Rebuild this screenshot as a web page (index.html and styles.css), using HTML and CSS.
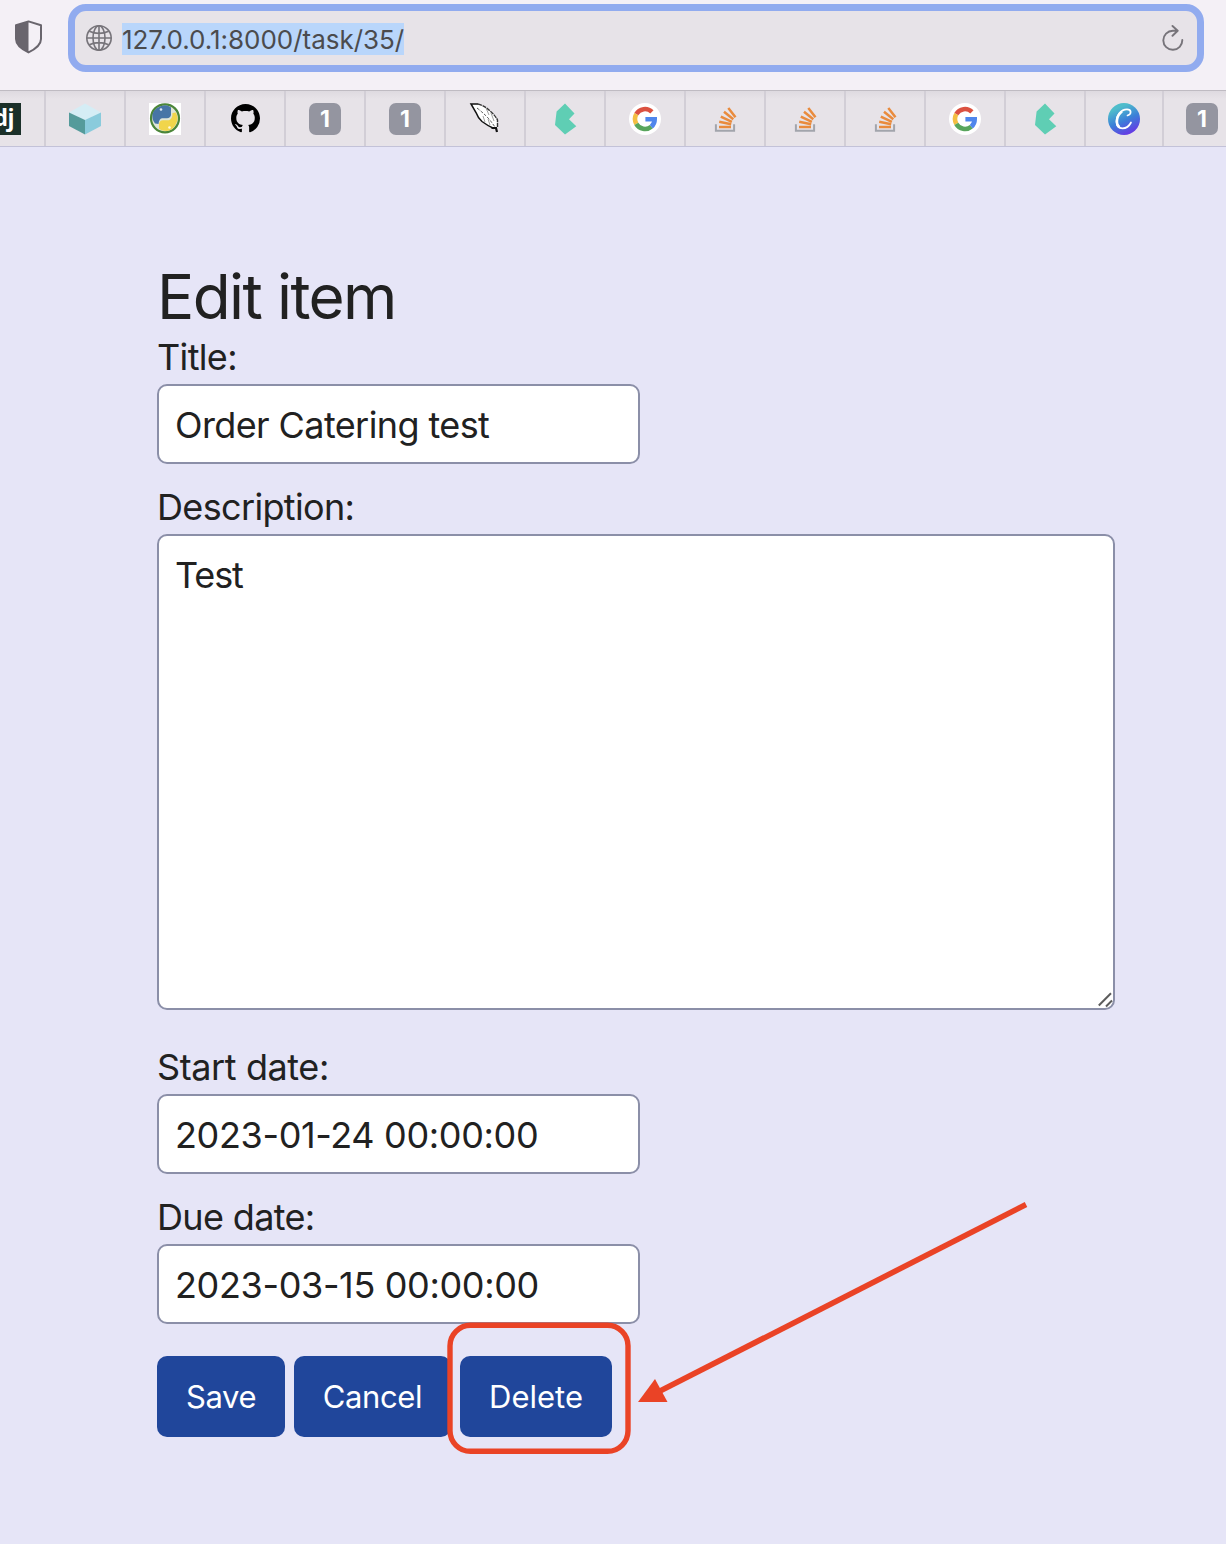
FILE: index.html
```html
<!DOCTYPE html>
<html lang="en">
<head>
<meta charset="utf-8">
<title>Edit item</title>
<link rel="stylesheet" href="styles.css">
</head>
<body>
<svg class="defs" width="0" height="0" aria-hidden="true">
  <symbol id="google" viewBox="0 0 32 32">
    <circle cx="16" cy="16" r="16" fill="#fff"/>
    <g fill="none" stroke-width="4.6">
      <path d="M22.9 8.9A9.9 9.9 0 0 0 7.3 11.2" stroke="#db5140"/>
      <path d="M7.3 11.2A9.9 9.9 0 0 0 7.3 20.8" stroke="#f3bf42"/>
      <path d="M7.3 20.8A9.9 9.9 0 0 0 22.3 23.7" stroke="#58a55c"/>
      <path d="M22.3 23.7A9.9 9.9 0 0 0 25.7 16.2H16.4" stroke="#4f86ec"/>
    </g>
  </symbol>
  <symbol id="stack" viewBox="0 0 32 32">
    <path d="M6.9 21.2v6.6h18.2v-6.6" fill="none" stroke="#a2a5ac" stroke-width="2"/>
    <g stroke="#e98b3d" stroke-width="2.5">
      <path d="M10 24.1h12M10.2 18.800l12 2.5M11.8 13.6l11.1 5.2M15 8.8l9.3 7.5M19.300 5l7.200 9.300"/>
    </g>
  </symbol>
  <symbol id="bulma" viewBox="0 0 32 32">
    <path d="M16 .4 25.500 10.4 20 16.2 27.300 23.2 16 31.4 6 22 7.600 8.6Z" fill="#5fceb4"/>
  </symbol>
</svg>

<header class="toolbar">
  <svg class="shield" viewBox="0 0 28 34">
    <path d="M13.500 1.4 26 5.2V19C26 25.5 19.500 29.5 13.500 32.4 7.500 29.5 1 25.5 1 19V5.2Z" fill="none" stroke="#69656d" stroke-width="2" stroke-linejoin="round"/>
    <path d="M13.500 1.4V32.4C7.500 29.5 1 25.5 1 19V5.2Z" fill="#69656d"/>
  </svg>
  <div class="address">
    <svg class="globe" viewBox="0 0 26 26" fill="none" stroke="#77747a" stroke-width="1.6">
      <circle cx="13" cy="13" r="12.2"/><ellipse cx="13" cy="13" rx="6" ry="12.2"/>
      <path d="M13 .8v24.4M.8 13h24.4M3.3 6.3Q13 10.5 22.7 6.3M3.3 19.7Q13 15.5 22.7 19.7"/>
    </svg>
    <span class="url">127.0.0.1:8000/task/35/</span>
    <svg class="reload" viewBox="0 0 22 28" fill="none" stroke="#77747a" stroke-width="1.9" stroke-linecap="round" stroke-linejoin="round">
      <path d="M20.3 15A9.5 9.5 0 1 1 10.800 5.800H15.500M10.500 1 15.700 5.800 10.500 10.800"/>
    </svg>
  </div>
</header>

<nav class="tabs">
  <div class="tab tab-first"><span class="django">dj</span></div>
  <div class="tab"><svg class="icon" viewBox="0 0 32 32"><path d="M16 .5 32 9.5 16 18 0 9.5Z" fill="#d5edf5"/><path d="M0 9.5 16 17v14.5L0 23Z" fill="#559b9b"/><path d="M32 9.5 16 17v14.5L32 23Z" fill="#8acbdc"/></svg></div>
  <div class="tab"><svg class="icon" viewBox="0 0 32 32"><path d="M0 0h32v32H0Z" fill="#fff"/><circle cx="16" cy="15.300" r="14" fill="#dfe5d6" stroke="#4b8639" stroke-width="2.2"/><path d="M8 5Q16 0 22 4.500V12Q21.500 15 18 15.300H13Q10 16 9.500 21L6 20.500Q2.500 16 3.500 11Q5 7 8 5Z" fill="#4775a6"/><path d="M23.5 10 27 9.500Q30 16 27 21Q24 27 18 28Q12 28 10 25.500V21Q10.500 17.500 14 17.300H20Q23.500 16 23.500 10Z" fill="#f1d54b"/><circle cx="12" cy="6.500" r="1.300" fill="#dfe9f2"/><circle cx="20.500" cy="24.500" r="1.300" fill="#fffbe0"/></svg></div>
  <div class="tab"><svg class="icon icon-github" viewBox="0 0 16 16"><path d="M8 0C3.58 0 0 3.58 0 8c0 3.54 2.29 6.53 5.47 7.59.4.07.55-.17.55-.38 0-.19-.01-.82-.01-1.49-2.01.37-2.53-.49-2.69-.94-.09-.23-.48-.94-.82-1.13-.28-.15-.68-.52-.01-.53.63-.01 1.08.58 1.23.82.72 1.21 1.87.87 2.33.66.07-.52.28-.87.51-1.07-1.78-.2-3.64-.89-3.64-3.95 0-.87.31-1.59.82-2.15-.08-.2-.36-1.02.08-2.12 0 0 .67-.21 2.2.82.64-.18 1.32-.27 2-.27s1.36.09 2 .27c1.53-1.04 2.2-.82 2.2-.82.44 1.1.16 1.92.08 2.12.51.56.82 1.27.82 2.15 0 3.07-1.87 3.75-3.65 3.95.29.25.54.73.54 1.48 0 1.07-.01 1.93-.01 2.2 0 .21.15.46.55.38A8.01 8.01 0 0 0 16 8c0-4.42-3.58-8-8-8Z"/></svg></div>
  <div class="tab"><span class="count">1</span></div>
  <div class="tab"><span class="count">1</span></div>
  <div class="tab"><svg class="icon" viewBox="0 0 32 32"><path d="M2 1 9 .8Q16 3 20.500 7.500 26 12 28.500 17L28.300 24 26 25.500Q19 23 13 18.500 9 15 7 9.500Z" fill="#fff"/><path d="M9 1Q16 3 20.500 7.500 26 12 28.500 17V24" fill="none" stroke="#333" stroke-width="1.400" stroke-dasharray="4 .8"/><path d="M9 1H2L7 9.500Q9 15 13 18.500 19 23 25 25.500" fill="none" stroke="#111" stroke-width="1.500"/><path d="M8 5Q17 12 22 18.500L26 24" fill="none" stroke="#555" stroke-width="1" stroke-dasharray="3 1.500"/><path d="M14 13 16 19M19 16 21 22M17 5 20 12M22 10 25 18" fill="none" stroke="#888" stroke-width=".8"/><path d="M22.500 25H27L28 29" fill="none" stroke="#111" stroke-width="2.200"/></svg></div>
  <div class="tab"><svg class="icon"><use href="#bulma"/></svg></div>
  <div class="tab"><svg class="icon"><use href="#google"/></svg></div>
  <div class="tab"><svg class="icon"><use href="#stack"/></svg></div>
  <div class="tab"><svg class="icon"><use href="#stack"/></svg></div>
  <div class="tab"><svg class="icon"><use href="#stack"/></svg></div>
  <div class="tab"><svg class="icon"><use href="#google"/></svg></div>
  <div class="tab"><svg class="icon"><use href="#bulma"/></svg></div>
  <div class="tab tab-canva"><svg class="icon" viewBox="0 0 32 32"><defs><linearGradient id="canva" x1=".25" y1="0" x2=".7" y2="1"><stop offset=".15" stop-color="#4fbdcb"/><stop offset=".55" stop-color="#3c7fd8"/><stop offset="1" stop-color="#6a32e6"/></linearGradient></defs><circle cx="16" cy="16" r="16" fill="url(#canva)"/><path d="M19.500 12.500C24 11 23.500 6.300 19 6.300 12.500 6.300 8.500 13 8.500 18.500 8.500 23 11 25.300 14.500 25.300 18.500 25.300 21.500 22.500 23 19.500" fill="none" stroke="#fff" stroke-width="1.700" stroke-linecap="round"/><path d="M14 8.500C8 13 7.500 21 11.500 24.300" fill="none" stroke="#fff" stroke-width="2.600"/></svg></div>
  <div class="tab tab-last"><span class="count">1</span></div>
</nav>

<main class="page">
  <h1 class="heading">Edit item</h1>
  <form class="form">
    <label class="label" for="title">Title:</label>
    <input class="field" id="title" type="text" value="Order Catering test">
    <label class="label" for="description">Description:</label>
    <div class="area">
      <textarea class="field field-area" id="description">Test</textarea>
      <svg class="grip" viewBox="0 0 16 16" stroke="#5c5c5c" stroke-width="2"><path d="M.8 13.500 13 1.300M8 14.500 14 8.500"/></svg>
    </div>
    <label class="label label-date" for="start">Start date:</label>
    <input class="field field-date" id="start" type="text" value="2023-01-24 00:00:00">
    <label class="label" for="due">Due date:</label>
    <input class="field field-date" id="due" type="text" value="2023-03-15 00:00:00">
    <div class="actions">
      <button class="button save" type="button">Save</button>
      <button class="button cancel" type="button">Cancel</button>
      <button class="button delete" type="button">Delete</button>
    </div>
  </form>
</main>

<svg class="annotation" viewBox="0 0 1226 1544">
  <rect x="450" y="1325.300" width="178" height="126" rx="20.500" fill="none" stroke="#ea4326" stroke-width="5.400"/>
  <path d="M1026 1204.500 660 1391" stroke="#ea4326" stroke-width="5.600"/>
  <path d="M638 1402 655 1379 667.500 1402Z" fill="#ea4326"/>
</svg>
</body>
</html>
```
FILE: styles.css
```css
* { box-sizing: border-box; }

body {
  margin: 0;
  position: relative;
  height: 1544px;
  overflow: hidden;
  background: #e6e5f7;
  color: #212121;
  font-family: Inter, "Liberation Sans", sans-serif;
}

.defs { display: none; }

.toolbar {
  display: flex;
  height: 90px;
  padding: 4px 22px 0 15px;
  background: #f4f0f6;
}

.shield { width: 28px; height: 34px; margin-top: 16px; }

.address {
  display: flex;
  flex: 1;
  align-items: center;
  height: 68px;
  margin-left: 25px;
  padding: 0 13px 0 11px;
  border: 7px solid #91abef;
  border-radius: 18px;
  background: #e7e3e8;
}

.globe { width: 26px; height: 26px; }

.url {
  height: 32px;
  margin: 2px auto 0 10px;
  background: #b9d6fb;
  color: #4b4b4d;
  font-size: 26px;
  line-height: 33px;
  letter-spacing: -0.03px;
}

.reload { width: 22px; height: 28px; margin-top: 1px; }

.tabs {
  display: flex;
  height: 57px;
  border-top: 1px solid #bfbbc2;
  border-bottom: 1px solid #c3c2d8;
  background: linear-gradient(#dedae0, #e7e3e8 8px);
}

.tab {
  display: flex;
  flex: none;
  align-items: center;
  justify-content: center;
  width: 80px;
  border-right: 2px solid #d2ced6;
}

.tab-first { width: 46px; justify-content: flex-start; }
.tab-canva { width: 78px; }
.tab-last { width: 76px; border-right: 0; }

.icon { width: 32px; height: 32px; }
.icon-github { width: 29px; height: 29px; }

.django {
  display: flex;
  justify-content: flex-end;
  width: 21px;
  height: 32px;
  padding-right: 7px;
  background: #1b3029;
  color: #fff;
  font: bold 23px/28px "Open Sans", sans-serif;
  letter-spacing: -0.5px;
}

.count {
  width: 32px;
  height: 32px;
  border-radius: 7px;
  background: #9495a0;
  color: #fff;
  font-size: 23px;
  font-weight: 700;
  line-height: 32px;
  text-align: center;
}

.page { padding: 113px 111px 0 157px; }

.heading {
  margin: 0;
  font-size: 62px;
  font-weight: 400;
  line-height: 73px;
  height: 70px;
  letter-spacing: -1.6px;
}

.form { display: flex; flex-direction: column; align-items: flex-start; }

.label {
  height: 54px;
  font-size: 36px;
  line-height: 54px;
  letter-spacing: -0.65px;
}

.label-date { letter-spacing: -0.4px; }

.field {
  display: block;
  width: 483px;
  height: 80px;
  margin: 0 0 16px;
  padding: 2px 16px 0;
  border: 2px solid #8b8fa8;
  border-radius: 10px;
  outline: 0;
  background: #fff;
  color: #212121;
  font: 36px/54px Inter, sans-serif;
  letter-spacing: -0.6px;
}

.field-date { letter-spacing: -0.35px; }

.area { position: relative; width: 958px; height: 476px; margin-bottom: 30px; }

.field-area { width: 100%; height: 100%; padding-top: 12px; resize: none; letter-spacing: -1.1px; }

.grip { position: absolute; right: 1px; bottom: 2px; width: 16px; height: 16px; }

.actions { display: flex; margin-top: 16px; }

.button {
  height: 81px;
  padding: 0;
  border: 0;
  border-radius: 10px;
  background: #20469b;
  color: #fff;
  font: 31px/81px Inter, sans-serif;
  letter-spacing: -0.4px;
}

.save { width: 128px; margin-right: 9px; }
.cancel { width: 157px; margin-right: 9px; }
.delete { width: 152px; letter-spacing: 0; }

.annotation {
  position: absolute;
  top: 0;
  left: 0;
  width: 1226px;
  height: 1544px;
  pointer-events: none;
}
```
